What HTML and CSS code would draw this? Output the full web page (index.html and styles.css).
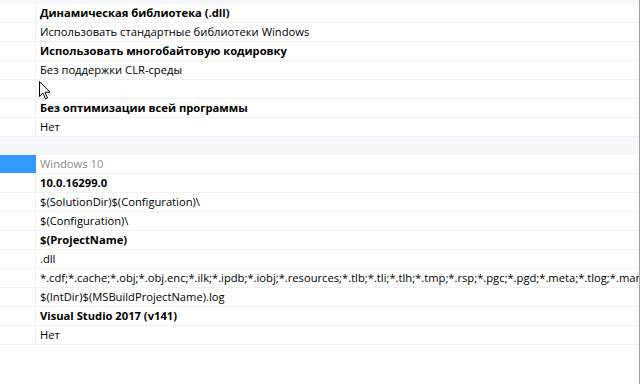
FILE: index.html
```html
<!DOCTYPE html>
<html lang="ru">
<head>
  <meta charset="UTF-8" />
  <title>Свойства проекта</title>
  <link rel="stylesheet" href="styles.css">
</head>
<body>
  <div class="grid">
    <div class="band"></div>

    <div class="row"><div class="key"></div><div class="val bold">Динамическая библиотека (.dll)</div></div>
    <div class="row"><div class="key"></div><div class="val">Использовать стандартные библиотеки Windows</div></div>
    <div class="row"><div class="key"></div><div class="val bold">Использовать многобайтовую кодировку</div></div>
    <div class="row"><div class="key"></div><div class="val">Без поддержки CLR-среды</div></div>
    <div class="row"><div class="key"></div><div class="val"></div></div>
    <div class="row"><div class="key"></div><div class="val bold">Без оптимизации всей программы</div></div>
    <div class="row"><div class="key"></div><div class="val">Нет</div></div>

    <!-- заголовок группы -->
    <div class="group"></div>

    <div class="row selected"><div class="key"></div><div class="val muted">Windows 10</div></div>
    <div class="row"><div class="key"></div><div class="val bold">10.0.16299.0</div></div>
    <div class="row"><div class="key"></div><div class="val">$(SolutionDir)$(Configuration)\</div></div>
    <div class="row"><div class="key"></div><div class="val">$(Configuration)\</div></div>
    <div class="row"><div class="key"></div><div class="val bold">$(ProjectName)</div></div>
    <div class="row"><div class="key"></div><div class="val">.dll</div></div>
    <div class="row"><div class="key"></div><div class="val">*.cdf;*.cache;*.obj;*.obj.enc;*.ilk;*.ipdb;*.iobj;*.resources;*.tlb;*.tli;*.tlh;*.tmp;*.rsp;*.pgc;*.pgd;*.meta;*.tlog;*.manif</div></div>
    <div class="row"><div class="key"></div><div class="val">$(IntDir)$(MSBuildProjectName).log</div></div>
    <div class="row"><div class="key"></div><div class="val bold">Visual Studio 2017 (v141)</div></div>
    <div class="row"><div class="key"></div><div class="val">Нет</div></div>

    <!-- курсор мыши -->
    <svg class="cursor" width="12" height="19" viewBox="0 0 12 19">
      <path d="M0.5 0.5 L0.5 15.5 L4 12 L6.5 18 L8.5 17 L6 11.2 L11 11.2 Z" fill="#fff" stroke="#000" stroke-width="1" stroke-linejoin="miter"/>
    </svg>
  </div>
</body>
</html>
```

FILE: styles.css
```css
* { margin: 0; padding: 0; box-sizing: border-box; }

body {
  width: 640px;
  height: 384px;
  background: #ffffff;
  font-family: "Open Sans", "Noto Sans", sans-serif;
  font-size: 11.2px;
  color: #000;
  overflow: hidden;
}

.grid {
  position: relative;
  width: 640px;
  height: 384px;
  border-right: 1px solid #a0a0a0;
}

.band {
  height: 4px;
  background: #f5f7fb;
}

.group {
  height: 18px;
  background: #f5f7fb;
}

.row {
  display: flex;
  height: 19px;
  border-bottom: 1px solid #f0f0f5;
}

.key {
  width: 36px;
  flex: none;
  border-right: 1px solid #f0f0f5;
}

.val {
  flex: 1;
  padding-left: 4px;
  line-height: 18px;
  white-space: nowrap;
  overflow: hidden;
}

.bold { font-weight: 700; }
.muted { color: #8a8a8a; }

.selected .key {
  background: #3399ff;
  border-right-color: #3399ff;
}

.cursor {
  position: absolute;
  left: 39px;
  top: 81px;
}
```
